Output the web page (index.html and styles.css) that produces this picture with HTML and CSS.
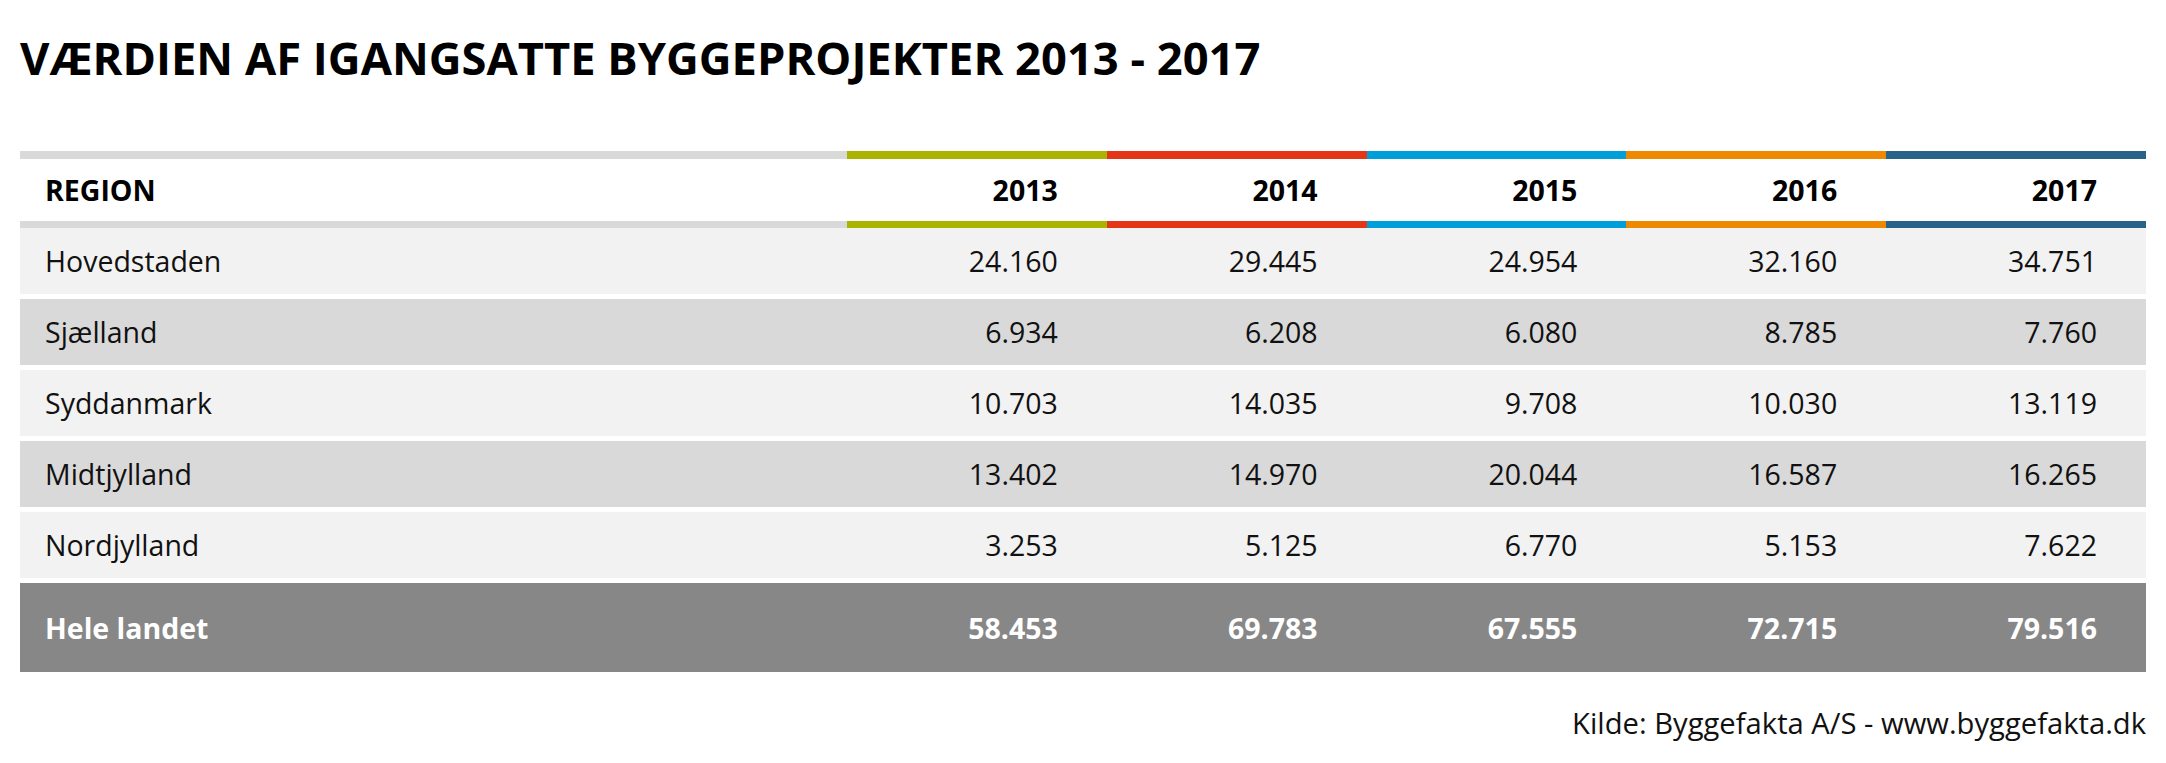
FILE: index.html
```html
<!DOCTYPE html>
<html lang="da">
<head>
<meta charset="utf-8">
<title>Værdien af igangsatte byggeprojekter 2013 - 2017</title>
<link rel="stylesheet" href="styles.css">
</head>
<body>
<h1 class="title">VÆRDIEN AF IGANGSATTE BYGGEPROJEKTER 2013 - 2017</h1>
<table class="data">
  <colgroup>
    <col class="col-region">
    <col class="col-year"><col class="col-year"><col class="col-year"><col class="col-year"><col class="col-year">
  </colgroup>
  <thead>
    <tr>
      <th class="region">REGION</th>
      <th class="y13">2013</th>
      <th class="y14">2014</th>
      <th class="y15">2015</th>
      <th class="y16">2016</th>
      <th class="y17">2017</th>
    </tr>
  </thead>
  <tbody>
    <tr class="light"><td>Hovedstaden</td><td>24.160</td><td>29.445</td><td>24.954</td><td>32.160</td><td>34.751</td></tr>
    <tr class="dark"><td>Sjælland</td><td>6.934</td><td>6.208</td><td>6.080</td><td>8.785</td><td>7.760</td></tr>
    <tr class="light"><td>Syddanmark</td><td>10.703</td><td>14.035</td><td>9.708</td><td>10.030</td><td>13.119</td></tr>
    <tr class="dark"><td>Midtjylland</td><td>13.402</td><td>14.970</td><td>20.044</td><td>16.587</td><td>16.265</td></tr>
    <tr class="light"><td>Nordjylland</td><td>3.253</td><td>5.125</td><td>6.770</td><td>5.153</td><td>7.622</td></tr>
    <tr class="total"><td>Hele landet</td><td>58.453</td><td>69.783</td><td>67.555</td><td>72.715</td><td>79.516</td></tr>
  </tbody>
</table>
<p class="source">Kilde: Byggefakta A/S - www.byggefakta.dk</p>
</body>
</html>
```

FILE: styles.css
```css
html, body {
  margin: 0;
  padding: 0;
  background: #ffffff;
}
body {
  padding: 0 20px;
  font-family: "Open Sans", "Noto Sans", "Liberation Sans", sans-serif;
  color: #111111;
}
.title {
  margin: 27px 0 0 0;
  font-size: 45.3px;
  line-height: 61px;
  font-weight: 700;
  color: #000000;
  letter-spacing: 0;
}
.data {
  margin-top: 63px;
  width: 100%;
  border-collapse: separate;
  border-spacing: 0;
  table-layout: fixed;
  font-size: 28.5px;
}
.col-region { width: 827px; }
.data th {
  height: 62px;
  padding: 0 49px 0 0;
  font-weight: 700;
  text-align: right;
  border-top: 8px solid #d9d9d9;
  border-bottom: 7px solid #d9d9d9;
  color: #000000;
}
.data th.region {
  text-align: left;
  padding: 0 0 0 25px;
}
.data th.y13 { border-color: #a9b300; }
.data th.y14 { border-color: #e43517; }
.data th.y15 { border-color: #009fd9; }
.data th.y16 { border-color: #ef8801; }
.data th.y17 { border-color: #276289; }
.data td {
  height: 66px;
  padding: 0 49px 0 0;
  text-align: right;
  background-clip: padding-box;
  color: #111111;
}
.data td:first-child {
  text-align: left;
  padding: 0 0 0 25px;
}
.data tbody tr + tr td {
  border-top: 5px solid transparent;
}
.data tr.light td { background-color: #f2f2f2; }
.data tr.dark td { background-color: #d9d9d9; }
.data tr.total td {
  height: 89px;
  background-color: #878787;
  color: #ffffff;
  font-weight: 700;
}
.source {
  margin: 31px 0 0 0;
  text-align: right;
  font-size: 29.2px;
  line-height: 40px;
  color: #111111;
}
```
